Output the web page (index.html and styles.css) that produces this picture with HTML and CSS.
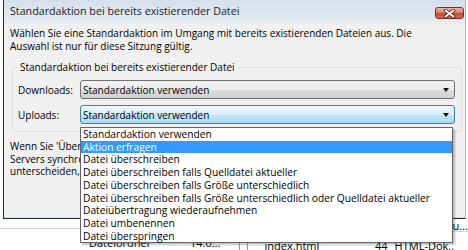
FILE: index.html
```html
<!DOCTYPE html>
<html>

<head>
  <meta charset="utf-8">
  <link rel="stylesheet" href="styles.css">
</head>

<body>
  <div class="screen">
    <div class="dialog">
      <div class="titlebar">
        <span class="title">Standardaktion bei bereits existierender Datei</span>
        <button class="close" aria-label="Schließen">
          <svg width="13" height="9" viewBox="0 0 13 9">
            <path d="M2.5 1.5 L10.5 7.5 M10.5 1.5 L2.5 7.5" stroke="#5e2114" stroke-width="3.6" stroke-linecap="round" />
            <path d="M2.5 1.5 L10.5 7.5 M10.5 1.5 L2.5 7.5" stroke="#ffffff" stroke-width="2" stroke-linecap="round" />
          </svg>
        </button>
      </div>

      <div class="client">
        <p class="intro">Wählen Sie eine Standardaktion im Umgang mit bereits existierenden Dateien aus. Die<br>Auswahl ist nur für diese Sitzung gültig.</p>

        <fieldset class="group">
          <legend>Standardaktion bei bereits existierender Datei</legend>
          <div class="field">
            <label>Downloads:</label>
            <div class="combo">Standardaktion verwenden<span class="arrow"></span></div>
          </div>
          <div class="field">
            <label>Uploads:</label>
            <div class="combo hot">Standardaktion verwenden<span class="arrow"></span></div>
          </div>
        </fieldset>

        <!-- the rest of this text sits under the open dropdown -->
        <p class="note">Wenn Sie 'Überschreiben falls Quelldatei aktueller' wählen, sollten die Uhren<br>Servers synchronisiert sein. Falls sich die Zeitzonen<br>unterscheiden, passen Sie bitte die Zeitzone an.</p>
      </div>
    </div>

    <!-- file lists of the main window behind the dialog -->
    <div class="panes">
      <div class="pane local">
        <div class="head"></div>
        <div class="row">
          <span class="cell l-name"></span>
          <span class="cell l-type">Dateiordner</span>
          <span class="cell l-date">14.0…</span>
        </div>
      </div>
      <div class="pane remote">
        <div class="head">
          <span class="cell h-spacer"></span>
          <span class="cell h-last">u...</span>
        </div>
        <div class="row">
          <span class="cell r-name">index.html</span>
          <span class="cell r-size">44</span>
          <span class="cell r-type">HTML-Dok..</span>
        </div>
      </div>
    </div>

    <ul class="droplist">
      <li>Standardaktion verwenden</li>
      <li class="selected">Aktion erfragen</li>
      <li>Datei überschreiben</li>
      <li>Datei überschreiben falls Quelldatei aktueller</li>
      <li>Datei überschreiben falls Größe unterschiedlich</li>
      <li>Datei überschreiben falls Größe unterschiedlich oder Quelldatei aktueller</li>
      <li>Dateiübertragung wiederaufnehmen</li>
      <li>Datei umbenennen</li>
      <li>Datei überspringen</li>
    </ul>
  </div>
</body>

</html>
```

FILE: styles.css
```css
* {
  box-sizing: border-box;
}

body {
  margin: 0;
  font-family: "Open Sans", "Noto Sans", sans-serif;
  font-size: 10px;
  color: #000;
  background: #fff;
}

.screen {
  position: relative;
  width: 468px;
  height: 250px;
  overflow: hidden;
  background: #fff;
}

/* dialog window */
.dialog {
  margin-left: 3px;
  width: 463px;
  height: 219px;
  border-left: 1px solid #1f2d3d;
  border-right: 1px solid #aab6c2;
  border-bottom: 1px solid #1f2d3d;
  display: flex;
  flex-direction: column;
}

.titlebar {
  flex: none;
  height: 24px;
  display: flex;
  align-items: flex-start;
  justify-content: space-between;
  padding: 0 1px 0 6px;
  background: linear-gradient(#d5e0ec, #e5ecf4);
}

.title {
  font-size: 10.7px;
  line-height: 14px;
  padding-top: 4px;
  color: #1b1b1b;
}

.close {
  margin-top: 7px;
  width: 29px;
  height: 12px;
  padding: 0;
  border: 1px solid #7d2c1e;
  border-radius: 3px;
  background: linear-gradient(#ecb6a8, #dc8169 45%, #c9492f 55%, #d5694d);
  display: flex;
  align-items: center;
  justify-content: center;
}

.client {
  flex: 1;
  background: #f0f0f0;
  border-bottom: 1px solid #c4e3f0;
  padding-top: 3px;
}

.intro {
  margin: 0;
  padding: 0 6px;
  line-height: 13px;
  white-space: nowrap;
}

/* group box */
.group {
  margin: 8px 3px 0 8px;
  padding: 6px 6px 7px 5px;
  border: 1px solid #d5dfe5;
  border-radius: 3px;
}

.group legend {
  padding: 0 2px;
  line-height: 13px;
}

.field {
  display: flex;
  align-items: center;
}

.field + .field {
  margin-top: 6px;
}

.field label {
  flex: none;
  width: 62px;
}

.combo {
  flex: 1;
  height: 19px;
  display: flex;
  align-items: center;
  justify-content: space-between;
  padding: 0 5px 0 2px;
  border: 1px solid #707070;
  border-radius: 3px;
  background: linear-gradient(#f3f3f3, #ebebeb 50%, #dedede 50%, #d0d0d0);
}

.combo.hot {
  border-color: #3c7fb1;
  background: linear-gradient(#eaf6fd, #d9f0fc 50%, #bee6fd 50%, #a7d9f5);
}

.arrow {
  width: 0;
  height: 0;
  border-left: 3.5px solid transparent;
  border-right: 3.5px solid transparent;
  border-top: 4px solid #111;
}

/* only the part left of the dropdown is visible */
.note {
  width: 76px;
  margin: 8px 0 0;
  padding-left: 6px;
  line-height: 12.7px;
  white-space: nowrap;
  overflow: hidden;
}

/* open dropdown of the Uploads combo */
.droplist {
  position: absolute;
  left: 80px;
  top: 127px;
  width: 373px;
  margin: 0;
  padding: 0;
  list-style: none;
  background: #fff;
  border: 1px solid #646464;
  box-shadow: 2px 2px 2px rgba(0, 0, 0, 0.25);
  font-size: 10.2px;
  line-height: 12.7px;
}

.droplist li {
  padding-left: 2px;
  white-space: nowrap;
}

.droplist li.selected {
  background: #3399ff;
  color: #fff;
}

/* main window behind */
.panes {
  display: flex;
  height: 31px;
  font-size: 11px;
}

.pane {
  display: flex;
  flex-direction: column;
}

.pane.local {
  width: 242px;
  border-right: 1px solid #9a9a9a;
}

.pane.remote {
  flex: 1;
  margin-left: 7px;
  border-left: 1px solid #9a9a9a;
}

.head {
  height: 13px;
  display: flex;
  line-height: 13px;
  border-bottom: 1px solid #d6d6d6;
}

.row {
  display: flex;
  padding-top: 7px;
  line-height: 14px;
  white-space: nowrap;
}

.cell {
  flex: none;
  overflow: hidden;
}

.l-name {
  width: 89px;
}

.l-type {
  width: 101px;
}

.h-spacer {
  width: 205px;
}

.r-name {
  width: 100px;
  padding-left: 17px;
}

.r-size {
  width: 40px;
  text-align: right;
}

.r-type {
  padding-left: 7px;
}
```
